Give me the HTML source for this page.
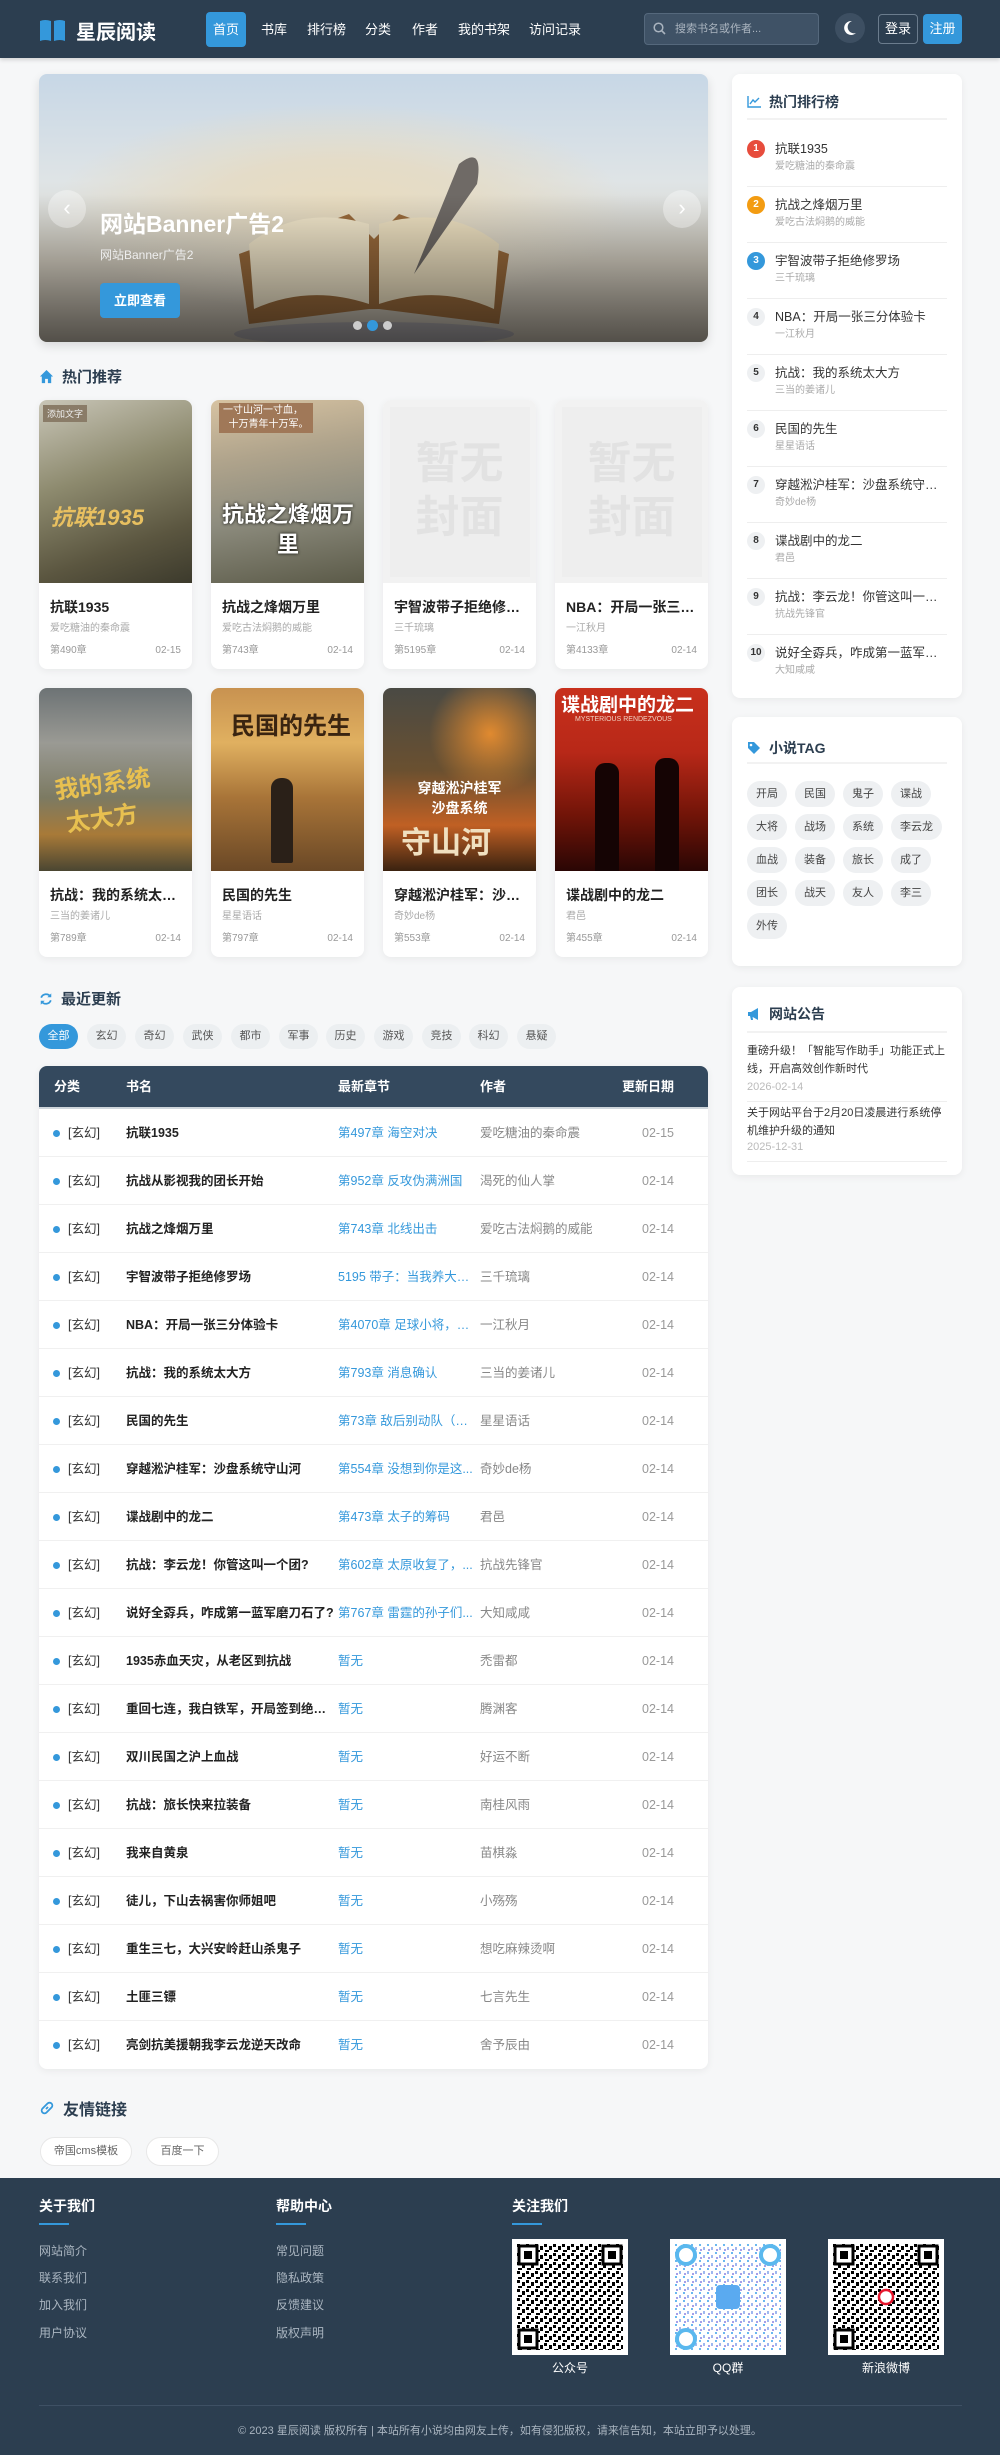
<!DOCTYPE html>
<html lang="zh"><head><meta charset="utf-8"><title>星辰阅读</title>
<style>
*{margin:0;padding:0;box-sizing:border-box}
body{width:1000px;height:2455px;background:#f6f7f8;font-family:"Liberation Sans","Noto Sans CJK SC",sans-serif;color:#333;position:relative;overflow:hidden}
.abs{position:absolute}
.hdr{left:0;top:0;width:1000px;height:58px;background:#2c3e50;box-shadow:0 2px 4px rgba(0,0,0,.15)}
.logo{left:39px;top:16px;color:#fff;font-size:20px;font-weight:bold;display:flex;align-items:center;gap:10px}
.nav a{position:absolute;top:12px;height:35px;line-height:35px;color:#fff;font-size:13px;text-decoration:none;padding:0 7px}
.nav a.on{background:#3498db;border-radius:4px}
.search{left:644px;top:13px;width:175px;height:32px;background:#3f5266;border:1px solid #55687c;border-radius:4px;color:#aab4bf;font-size:11px;line-height:30px;padding-left:30px}
.moon{left:835px;top:13px;width:30px;height:30px;border-radius:50%;background:#3d4f62}
.btn1{left:878px;top:14px;width:40px;height:30px;border:1px solid #6b7c8d;border-radius:4px;color:#fff;font-size:13px;text-align:center;line-height:28px}
.btn2{left:923px;top:14px;width:39px;height:30px;background:#3498db;border-radius:4px;color:#fff;font-size:13px;text-align:center;line-height:30px}
.banner{left:39px;top:74px;width:669px;height:268px;border-radius:8px;overflow:hidden;box-shadow:0 4px 10px rgba(0,0,0,.12);
background:radial-gradient(ellipse at 45% 50%,#e8dcc0 0%,#e4dcc8 25%,rgba(220,225,230,0) 55%),linear-gradient(180deg,#c7d7e6 0%,#dfe4e6 40%,#d8d2c4 70%,#b8b0a2 100%)}
.card{background:#fff;border-radius:8px;box-shadow:0 2px 8px rgba(0,0,0,.06)}
.sec{font-size:15px;font-weight:bold;color:#2c3e50;display:flex;align-items:center;gap:8px}
.book{position:absolute;width:153px;height:269px;overflow:hidden}
.cov{height:183px;position:relative;overflow:hidden}
.book .t{position:absolute;left:11px;top:197px;line-height:20px;font-size:14px;font-weight:bold;color:#222;white-space:nowrap;width:135px;overflow:hidden;text-overflow:ellipsis}
.book .a{position:absolute;left:11px;top:221px;line-height:16px;font-size:10px;color:#aaa}
.book .c{position:absolute;left:11px;top:243px;line-height:16px;font-size:10px;color:#999;width:131px}
.book .c span{float:right}
.none{background:#f2f2f2;display:flex;align-items:center;justify-content:center}
.none div{width:140px;height:170px;background:#eeeeee;color:#e2e2e2;font-size:44px;font-weight:bold;line-height:54px;text-align:center;padding-top:30px}
.chip{position:absolute;top:1024px;height:25px;border-radius:13px;background:#eceff1;color:#555;font-size:11px;line-height:25px;text-align:center;width:39px}
.tbl{left:39px;top:1066px;width:669px;height:1003px;border-radius:8px;overflow:hidden;background:#fff;box-shadow:0 2px 8px rgba(0,0,0,.06)}
.th{height:43px;background:#34495e;color:#fff;font-weight:bold;font-size:13px;position:relative;border-bottom:2px solid #cfd6dc}
.th span{position:absolute;top:12px;line-height:18px}
.tr{height:48px;position:relative;border-bottom:1px solid #f0f0f0;font-size:12.5px}
.tr span{position:absolute;top:15px;line-height:18px;height:18px;white-space:nowrap;overflow:hidden;text-overflow:ellipsis}
.tr .dot{left:14px;top:21px;width:7px;height:7px;border-radius:50%;background:#3498db}
.tr .k{left:29px;color:#333}
.tr .n{left:87px;width:212px;color:#222;font-weight:bold}
.tr .ch{left:299px;width:141px;color:#3498db}
.tr .au{left:441px;width:130px;color:#888}
.tr .d{left:603px;color:#999}
.rk{position:absolute;left:15px;width:200px;height:56px;border-bottom:1px solid #eee}
.rk .num{position:absolute;left:0;top:9px;width:18px;height:18px;border-radius:50%;background:#eef0f2;color:#333;font-size:10px;font-weight:bold;text-align:center;line-height:18px}
.rk .tt{position:absolute;left:28px;top:8px;line-height:20px;font-size:12.5px;color:#333;white-space:nowrap;width:172px;overflow:hidden;text-overflow:ellipsis}
.rk .au{position:absolute;left:28px;top:29px;line-height:14px;font-size:10px;color:#aaa}
.tag{position:absolute;height:26px;line-height:26px;border-radius:13px;background:#eef0f2;color:#444;font-size:11px;text-align:center;padding:0 9px}
.ft{left:0;top:2178px;width:1000px;height:277px;background:#2c3e50}
.fh{position:absolute;top:18px;color:#fff;font-size:14px;font-weight:bold}
.fh:after{content:"";position:absolute;left:0;top:27px;width:30px;height:2px;background:#3498db}
.fl{position:absolute;font-size:12px;color:#aab5c0}
.qr{position:absolute;top:61px;width:116px;height:116px;background:#fff;padding:5px}
.ql{position:absolute;top:181px;width:116px;text-align:center;color:#fff;font-size:12px}
</style></head><body>

<div class="abs hdr"></div>
<div class="abs logo"><svg width="27" height="24" viewBox="0 0 27 24"><path d="M1 2 Q6 0 12 2 L12 22 Q6 20 1 22Z" fill="#3498db"/><path d="M15 2 Q21 0 26 2 L26 22 Q21 20 15 22Z" fill="#3498db"/></svg><span>星辰阅读</span></div>
<div class="nav">
<a class="on" style="left:206px">首页</a><a style="left:254px">书库</a><a style="left:300px">排行榜</a><a style="left:358px">分类</a><a style="left:405px">作者</a><a style="left:451px">我的书架</a><a style="left:522px">访问记录</a>
</div>
<div class="abs search">搜索书名或作者...</div>
<svg class="abs" style="left:653px;top:22px" width="13" height="13" viewBox="0 0 13 13"><circle cx="5.5" cy="5.5" r="4.3" fill="none" stroke="#aab4bf" stroke-width="1.5"/><path d="M8.7 8.7 L12 12" stroke="#aab4bf" stroke-width="1.6"/></svg>
<div class="abs moon"></div>
<svg class="abs" style="left:843px;top:20px" width="14" height="16" viewBox="0 0 14 16"><path d="M9 1 A7 7 0 1 0 13 13 A6 6 0 0 1 9 1Z" fill="#fff"/></svg>
<div class="abs btn1">登录</div>
<div class="abs btn2">注册</div>

<div class="abs banner">
 <svg class="abs" style="left:170px;top:70px" width="330" height="200" viewBox="0 0 330 200">
  <path d="M30 110 L140 70 L165 95 L190 70 L300 110 L290 180 L170 165 L160 165 L40 180Z" fill="#9a6b3c"/>
  <path d="M40 100 Q90 60 160 80 L160 160 Q100 140 45 165Z" fill="#f3e8cc"/>
  <path d="M170 80 Q240 60 290 100 L285 165 Q230 140 170 160Z" fill="#efe2c2"/>
  <path d="M250 20 Q275 0 268 40 L205 130 Z" fill="#6f6a66"/>
  <ellipse cx="165" cy="190" rx="140" ry="12" fill="#7a7e99" opacity=".4"/>
 </svg>
 <div class="abs" style="left:0;top:120px;width:669px;height:148px;background:linear-gradient(180deg,rgba(0,0,0,0),rgba(0,0,0,.55))"></div>
 <div class="abs" style="left:61px;top:131px;color:#fff;font-size:23px;font-weight:bold">网站Banner广告2</div>
 <div class="abs" style="left:61px;top:172px;color:#eee;font-size:12px">网站Banner广告2</div>
 <div class="abs" style="left:61px;top:209px;width:80px;height:35px;background:#3498db;border-radius:4px;color:#fff;font-size:13px;font-weight:bold;text-align:center;line-height:35px">立即查看</div>
 <div class="abs" style="left:9px;top:116px;width:38px;height:38px;border-radius:50%;background:rgba(255,255,255,.35);color:#fff;font-size:22px;text-align:center;line-height:36px">‹</div>
 <div class="abs" style="left:624px;top:116px;width:38px;height:38px;border-radius:50%;background:rgba(255,255,255,.35);color:#fff;font-size:22px;text-align:center;line-height:36px">›</div>
 <div class="abs" style="left:314px;top:247px;width:9px;height:9px;border-radius:50%;background:#ccc"></div>
 <div class="abs" style="left:328px;top:246px;width:11px;height:11px;border-radius:50%;background:#3498db"></div>
 <div class="abs" style="left:344px;top:247px;width:9px;height:9px;border-radius:50%;background:#ccc"></div>
</div>

<div class="abs sec" style="left:39px;top:366px"><svg width="15" height="15" viewBox="0 0 16 16"><path d="M8 1 L1 8 H3 V15 H6.5 V10.5 H9.5 V15 H13 V8 H15Z" fill="#3498db"/></svg>热门推荐</div>

<div class="book card" style="left:39px;top:400px"><div class="cov" style="background:linear-gradient(160deg,#c9c6b8 0%,#8d8a6e 40%,#5b5640 75%,#3c3a2c 100%)"><div class="abs" style="left:4px;top:5px;background:#8a7c68;color:#eee;font-size:9px;padding:2px 4px">添加文字</div><div class="abs" style="left:12px;top:100px;color:#e8c060;font-size:22px;font-style:italic;font-weight:bold">抗联1935</div></div><div class="t">抗联1935</div><div class="a">爱吃糖油的秦命震</div><div class="c">第490章<span>02-15</span></div></div>
<div class="book card" style="left:211px;top:400px"><div class="cov" style="background:linear-gradient(170deg,#d7c3a2 0%,#b0a48c 30%,#8d8c7e 60%,#5b5a48 100%)"><div class="abs" style="left:8px;top:3px;background:#a07858;color:#fff;font-size:10px;padding:1px 4px;line-height:14px">一寸山河一寸血，<br>&nbsp;&nbsp;十万青年十万军。</div><div class="abs" style="left:2px;top:100px;color:#fff;font-size:22px;font-weight:bold;line-height:30px;text-align:center;width:150px;text-shadow:0 0 3px #000">抗战之烽烟万<br>里</div></div><div class="t">抗战之烽烟万里</div><div class="a">爱吃古法焖鹅的威能</div><div class="c">第743章<span>02-14</span></div></div>
<div class="book card" style="left:383px;top:400px"><div class="cov none"><div>暂无<br>封面</div></div><div class="t">宇智波带子拒绝修罗场</div><div class="a">三千琉璃</div><div class="c">第5195章<span>02-14</span></div></div>
<div class="book card" style="left:555px;top:400px"><div class="cov none"><div>暂无<br>封面</div></div><div class="t">NBA：开局一张三分...</div><div class="a">一江秋月</div><div class="c">第4133章<span>02-14</span></div></div>

<div class="book card" style="left:39px;top:688px"><div class="cov" style="background:linear-gradient(180deg,#6d7375 0%,#9a9a94 30%,#7c7a62 60%,#a87a38 80%,#4a4632 100%)"><div class="abs" style="left:18px;top:80px;color:#e8c050;font-size:24px;font-weight:bold;line-height:34px;transform:rotate(-8deg)">我的系统<br>&nbsp;太大方</div></div><div class="t">抗战：我的系统太大方</div><div class="a">三当的姜诸儿</div><div class="c">第789章<span>02-14</span></div></div>
<div class="book card" style="left:211px;top:688px"><div class="cov" style="background:linear-gradient(180deg,#c89250 0%,#e0b060 30%,#a87438 60%,#6a4826 100%)"><div class="abs" style="left:20px;top:18px;color:#3a2410;font-size:24px;font-weight:bold">民国的先生</div><div class="abs" style="left:60px;top:90px;width:22px;height:85px;background:#2a2018;border-radius:10px 10px 2px 2px"></div></div><div class="t">民国的先生</div><div class="a">星星语话</div><div class="c">第797章<span>02-14</span></div></div>
<div class="book card" style="left:383px;top:688px"><div class="cov" style="background:radial-gradient(circle at 70% 25%,#e08a30 0%,rgba(0,0,0,0) 35%),linear-gradient(180deg,#4a4a44 0%,#6a5030 45%,#c06024 75%,#3a2210 100%)"><div class="abs" style="left:10px;top:90px;width:133px;text-align:center;color:#fff;font-size:14px;font-weight:bold;line-height:20px">穿越淞沪桂军<br>沙盘系统</div><div class="abs" style="left:18px;top:130px;color:#f0e0c0;font-size:30px;font-weight:bold">守山河</div></div><div class="t">穿越淞沪桂军：沙盘...</div><div class="a">奇妙de杨</div><div class="c">第553章<span>02-14</span></div></div>
<div class="book card" style="left:555px;top:688px"><div class="cov" style="background:linear-gradient(180deg,#c8301c 0%,#b82818 35%,#701408 70%,#2a0604 100%)"><div class="abs" style="left:6px;top:2px;color:#fff;font-size:19px;font-weight:bold">谍战剧中的龙二</div><div class="abs" style="left:20px;top:28px;color:#f0d0c0;font-size:7px">MYSTERIOUS RENDEZVOUS</div><div class="abs" style="left:40px;top:75px;width:24px;height:110px;background:#150404;border-radius:10px 10px 0 0"></div><div class="abs" style="left:100px;top:70px;width:24px;height:117px;background:#150404;border-radius:10px 10px 0 0"></div></div><div class="t">谍战剧中的龙二</div><div class="a">君邑</div><div class="c">第455章<span>02-14</span></div></div>

<div class="abs sec" style="left:39px;top:988px"><svg width="14" height="14" viewBox="0 0 16 16"><path d="M13 5 A6 6 0 0 0 2.5 6.5 M3 11 A6 6 0 0 0 13.5 9.5" fill="none" stroke="#3498db" stroke-width="2"/><path d="M14 1.5 V6 H9.5Z M2 14.5 V10 H6.5Z" fill="#3498db"/></svg>最近更新</div>
<div class="chip" style="left:39px;background:#3498db;color:#fff">全部</div>
<div class="chip" style="left:87px">玄幻</div><div class="chip" style="left:135px">奇幻</div><div class="chip" style="left:183px">武侠</div><div class="chip" style="left:231px">都市</div><div class="chip" style="left:279px">军事</div><div class="chip" style="left:326px">历史</div><div class="chip" style="left:374px">游戏</div><div class="chip" style="left:422px">竞技</div><div class="chip" style="left:469px">科幻</div><div class="chip" style="left:517px">悬疑</div>

<div class="abs tbl">
<div class="th"><span style="left:15px">分类</span><span style="left:87px">书名</span><span style="left:299px">最新章节</span><span style="left:441px">作者</span><span style="left:583px">更新日期</span></div>
<div class="tr"><i class="abs dot"></i><span class="k">[玄幻]</span><span class="n">抗联1935</span><span class="ch">第497章 海空对决</span><span class="au">爱吃糖油的秦命震</span><span class="d">02-15</span></div>
<div class="tr"><i class="abs dot"></i><span class="k">[玄幻]</span><span class="n">抗战从影视我的团长开始</span><span class="ch">第952章 反攻伪满洲国</span><span class="au">渴死的仙人掌</span><span class="d">02-14</span></div>
<div class="tr"><i class="abs dot"></i><span class="k">[玄幻]</span><span class="n">抗战之烽烟万里</span><span class="ch">第743章 北线出击</span><span class="au">爱吃古法焖鹅的威能</span><span class="d">02-14</span></div>
<div class="tr"><i class="abs dot"></i><span class="k">[玄幻]</span><span class="n">宇智波带子拒绝修罗场</span><span class="ch">5195 带子：当我养大战...</span><span class="au">三千琉璃</span><span class="d">02-14</span></div>
<div class="tr"><i class="abs dot"></i><span class="k">[玄幻]</span><span class="n">NBA：开局一张三分体验卡</span><span class="ch">第4070章 足球小将，未...</span><span class="au">一江秋月</span><span class="d">02-14</span></div>
<div class="tr"><i class="abs dot"></i><span class="k">[玄幻]</span><span class="n">抗战：我的系统太大方</span><span class="ch">第793章 消息确认</span><span class="au">三当的姜诸儿</span><span class="d">02-14</span></div>
<div class="tr"><i class="abs dot"></i><span class="k">[玄幻]</span><span class="n">民国的先生</span><span class="ch">第73章 敌后别动队（六）</span><span class="au">星星语话</span><span class="d">02-14</span></div>
<div class="tr"><i class="abs dot"></i><span class="k">[玄幻]</span><span class="n">穿越淞沪桂军：沙盘系统守山河</span><span class="ch">第554章 没想到你是这...</span><span class="au">奇妙de杨</span><span class="d">02-14</span></div>
<div class="tr"><i class="abs dot"></i><span class="k">[玄幻]</span><span class="n">谍战剧中的龙二</span><span class="ch">第473章 太子的筹码</span><span class="au">君邑</span><span class="d">02-14</span></div>
<div class="tr"><i class="abs dot"></i><span class="k">[玄幻]</span><span class="n">抗战：李云龙！你管这叫一个团?</span><span class="ch">第602章 太原收复了，...</span><span class="au">抗战先锋官</span><span class="d">02-14</span></div>
<div class="tr"><i class="abs dot"></i><span class="k">[玄幻]</span><span class="n">说好全孬兵，咋成第一蓝军磨刀石了?</span><span class="ch">第767章 雷霆的孙子们...</span><span class="au">大知咸咸</span><span class="d">02-14</span></div>
<div class="tr"><i class="abs dot"></i><span class="k">[玄幻]</span><span class="n">1935赤血天灾，从老区到抗战</span><span class="ch">暂无</span><span class="au">禿雷都</span><span class="d">02-14</span></div>
<div class="tr"><i class="abs dot"></i><span class="k">[玄幻]</span><span class="n">重回七连，我白铁军，开局签到绝情坑</span><span class="ch">暂无</span><span class="au">腾渊客</span><span class="d">02-14</span></div>
<div class="tr"><i class="abs dot"></i><span class="k">[玄幻]</span><span class="n">双川民国之沪上血战</span><span class="ch">暂无</span><span class="au">好运不断</span><span class="d">02-14</span></div>
<div class="tr"><i class="abs dot"></i><span class="k">[玄幻]</span><span class="n">抗战：旅长快来拉装备</span><span class="ch">暂无</span><span class="au">南桂风雨</span><span class="d">02-14</span></div>
<div class="tr"><i class="abs dot"></i><span class="k">[玄幻]</span><span class="n">我来自黄泉</span><span class="ch">暂无</span><span class="au">苗棋淼</span><span class="d">02-14</span></div>
<div class="tr"><i class="abs dot"></i><span class="k">[玄幻]</span><span class="n">徒儿，下山去祸害你师姐吧</span><span class="ch">暂无</span><span class="au">小殇殇</span><span class="d">02-14</span></div>
<div class="tr"><i class="abs dot"></i><span class="k">[玄幻]</span><span class="n">重生三七，大兴安岭赶山杀鬼子</span><span class="ch">暂无</span><span class="au">想吃麻辣烫啊</span><span class="d">02-14</span></div>
<div class="tr"><i class="abs dot"></i><span class="k">[玄幻]</span><span class="n">土匪三镖</span><span class="ch">暂无</span><span class="au">七言先生</span><span class="d">02-14</span></div>
<div class="tr" style="border:none"><i class="abs dot"></i><span class="k">[玄幻]</span><span class="n">亮剑抗美援朝我李云龙逆天改命</span><span class="ch">暂无</span><span class="au">舍予辰由</span><span class="d">02-14</span></div>
</div>

<div class="abs sec" style="left:39px;top:2096px;font-size:16px"><svg width="16" height="16" viewBox="0 0 16 16"><path d="M7 9 L9 7 M6 6 L3.5 8.5 A2.5 2.5 0 0 0 7.5 12.5 L10 10 M10 10 L12.5 7.5 A2.5 2.5 0 0 0 8.5 3.5 L6 6" fill="none" stroke="#3498db" stroke-width="1.8"/></svg>友情链接</div>
<div class="abs" style="left:40px;top:2137px;width:92px;height:29px;border:1px solid #e8e8e8;background:#fff;border-radius:15px;font-size:11px;color:#666;text-align:center;line-height:27px">帝国cms模板</div>
<div class="abs" style="left:146px;top:2137px;width:73px;height:29px;border:1px solid #e8e8e8;background:#fff;border-radius:15px;font-size:11px;color:#666;text-align:center;line-height:27px">百度一下</div>

<div class="abs card" style="left:732px;top:74px;width:230px;height:624px">
 <div class="abs sec" style="left:15px;top:18px;font-size:14px"><svg width="14" height="12" viewBox="0 0 14 12"><path d="M1 0 V11 H14" fill="none" stroke="#3498db" stroke-width="1.4"/><path d="M3 8 L6 4 L8 6 L12 2" fill="none" stroke="#3498db" stroke-width="1.4"/></svg>热门排行榜</div>
 <div class="abs" style="left:15px;top:44px;width:200px;height:2px;background:#f2f2f2"></div>
 <div class="rk" style="top:57px"><div class="num" style="background:#e74c3c;color:#fff">1</div><div class="tt">抗联1935</div><div class="au">爱吃糖油的秦命震</div></div>
 <div class="rk" style="top:113px"><div class="num" style="background:#f39c12;color:#fff">2</div><div class="tt">抗战之烽烟万里</div><div class="au">爱吃古法焖鹅的威能</div></div>
 <div class="rk" style="top:169px"><div class="num" style="background:#3498db;color:#fff">3</div><div class="tt">宇智波带子拒绝修罗场</div><div class="au">三千琉璃</div></div>
 <div class="rk" style="top:225px"><div class="num">4</div><div class="tt">NBA：开局一张三分体验卡</div><div class="au">一江秋月</div></div>
 <div class="rk" style="top:281px"><div class="num">5</div><div class="tt">抗战：我的系统太大方</div><div class="au">三当的姜诸儿</div></div>
 <div class="rk" style="top:337px"><div class="num">6</div><div class="tt">民国的先生</div><div class="au">星星语话</div></div>
 <div class="rk" style="top:393px"><div class="num">7</div><div class="tt">穿越淞沪桂军：沙盘系统守山河</div><div class="au">奇妙de杨</div></div>
 <div class="rk" style="top:449px"><div class="num">8</div><div class="tt">谍战剧中的龙二</div><div class="au">君邑</div></div>
 <div class="rk" style="top:505px"><div class="num">9</div><div class="tt">抗战：李云龙！你管这叫一个...</div><div class="au">抗战先锋官</div></div>
 <div class="rk" style="top:561px;border:none"><div class="num">10</div><div class="tt">说好全孬兵，咋成第一蓝军磨...</div><div class="au">大知咸咸</div></div>
</div>

<div class="abs card" style="left:732px;top:717px;width:230px;height:249px">
 <div class="abs sec" style="left:15px;top:21px;font-size:14px"><svg width="14" height="14" viewBox="0 0 14 14"><path d="M1 1 H7 L13 7 L7 13 L1 7Z" fill="#3498db"/><circle cx="4" cy="4" r="1.3" fill="#fff"/></svg>小说TAG</div>
 <div class="abs" style="left:15px;top:45px;width:200px;height:2px;background:#f2f2f2"></div>
 <div class="tag" style="left:15px;top:64px">开局</div><div class="tag" style="left:63px;top:64px">民国</div><div class="tag" style="left:111px;top:64px">鬼子</div><div class="tag" style="left:159px;top:64px">谍战</div>
 <div class="tag" style="left:15px;top:97px">大将</div><div class="tag" style="left:63px;top:97px">战场</div><div class="tag" style="left:111px;top:97px">系统</div><div class="tag" style="left:159px;top:97px">李云龙</div>
 <div class="tag" style="left:15px;top:130px">血战</div><div class="tag" style="left:63px;top:130px">装备</div><div class="tag" style="left:111px;top:130px">旅长</div><div class="tag" style="left:159px;top:130px">成了</div>
 <div class="tag" style="left:15px;top:163px">团长</div><div class="tag" style="left:63px;top:163px">战天</div><div class="tag" style="left:111px;top:163px">友人</div><div class="tag" style="left:159px;top:163px">李三</div>
 <div class="tag" style="left:15px;top:196px">外传</div>
</div>

<div class="abs card" style="left:732px;top:987px;width:230px;height:188px">
 <div class="abs sec" style="left:15px;top:17px;font-size:14px"><svg width="14" height="14" viewBox="0 0 14 14"><path d="M1 5 H4 L11 1 V13 L4 9 H1Z" fill="#3498db"/><path d="M3 9 L4 13 H6 L5.5 9" fill="#3498db"/></svg>网站公告</div>
 <div class="abs" style="left:15px;top:44px;width:200px;height:2px;background:#f2f2f2"></div>
 <div class="abs" style="left:15px;top:55px;width:200px;font-size:11px;line-height:18px;color:#333">重磅升级！「智能写作助手」功能正式上线，开启高效创作新时代</div>
 <div class="abs" style="left:15px;top:94px;font-size:11px;color:#bbb">2026-02-14</div>
 <div class="abs" style="left:15px;top:114px;width:200px;height:1px;background:#eee"></div>
 <div class="abs" style="left:15px;top:117px;width:200px;font-size:11px;line-height:18px;color:#333">关于网站平台于2月20日凌晨进行系统停机维护升级的通知</div>
 <div class="abs" style="left:15px;top:154px;font-size:11px;color:#bbb">2025-12-31</div>
 <div class="abs" style="left:15px;top:174px;width:200px;height:1px;background:#eee"></div>
</div>

<svg width="0" height="0" style="position:absolute"><defs>
<pattern id="q1" width="9" height="9" patternUnits="userSpaceOnUse"><rect width="3" height="3" fill="#000"/><rect x="5" y="2" width="3" height="4" fill="#000"/><rect x="1" y="6" width="4" height="2" fill="#000"/></pattern>
<pattern id="q2" width="8" height="8" patternUnits="userSpaceOnUse"><rect width="2" height="2" fill="#6ab8f0"/><rect x="4" y="3" width="2" height="3" fill="#9fb8f0"/><rect x="1" y="5" width="2" height="2" fill="#a8a0e8"/></pattern>
</defs></svg>
<div class="abs ft">
 <div class="fh" style="left:39px">关于我们</div>
 <div class="fl" style="left:39px;top:64px">网站简介</div><div class="fl" style="left:39px;top:91px">联系我们</div><div class="fl" style="left:39px;top:118px">加入我们</div><div class="fl" style="left:39px;top:146px">用户协议</div>
 <div class="fh" style="left:276px">帮助中心</div>
 <div class="fl" style="left:276px;top:64px">常见问题</div><div class="fl" style="left:276px;top:91px">隐私政策</div><div class="fl" style="left:276px;top:118px">反馈建议</div><div class="fl" style="left:276px;top:146px">版权声明</div>
 <div class="fh" style="left:512px">关注我们</div>
 <div class="qr" style="left:512px"><svg width="106" height="106"><rect width="106" height="106" fill="url(#q1)"/><g fill="#fff" stroke="#000" stroke-width="3"><rect x="2" y="2" width="18" height="18"/><rect x="86" y="2" width="18" height="18"/><rect x="2" y="86" width="18" height="18"/></g><g fill="#000"><rect x="7" y="7" width="8" height="8"/><rect x="91" y="7" width="8" height="8"/><rect x="7" y="91" width="8" height="8"/></g></svg></div>
 <div class="qr" style="left:670px"><svg width="106" height="106"><rect width="106" height="106" fill="url(#q2)"/><g fill="#fff" stroke="#5ab8ee" stroke-width="4"><circle cx="11" cy="11" r="9"/><circle cx="95" cy="11" r="9"/><circle cx="11" cy="95" r="9"/></g><rect x="41" y="41" width="24" height="24" rx="4" fill="#5aaaf0"/></svg></div>
 <div class="qr" style="left:828px"><svg width="106" height="106"><rect width="106" height="106" fill="url(#q1)"/><g fill="#fff" stroke="#000" stroke-width="3"><rect x="2" y="2" width="18" height="18"/><rect x="86" y="2" width="18" height="18"/><rect x="2" y="86" width="18" height="18"/></g><g fill="#000"><rect x="7" y="7" width="8" height="8"/><rect x="91" y="7" width="8" height="8"/><rect x="7" y="91" width="8" height="8"/></g><circle cx="53" cy="53" r="7" fill="#fff" stroke="#e6162d" stroke-width="2.5"/></svg></div>
 <div class="ql" style="left:512px">公众号</div><div class="ql" style="left:670px">QQ群</div><div class="ql" style="left:828px">新浪微博</div>
 <div class="abs" style="left:39px;top:227px;width:923px;height:1px;background:#3e5064"></div>
 <div class="abs" style="left:0;top:244px;width:1000px;text-align:center;font-size:11px;color:#aab5c0">© 2023 星辰阅读 版权所有 | 本站所有小说均由网友上传，如有侵犯版权，请来信告知，本站立即予以处理。</div>
</div>
</body></html>
